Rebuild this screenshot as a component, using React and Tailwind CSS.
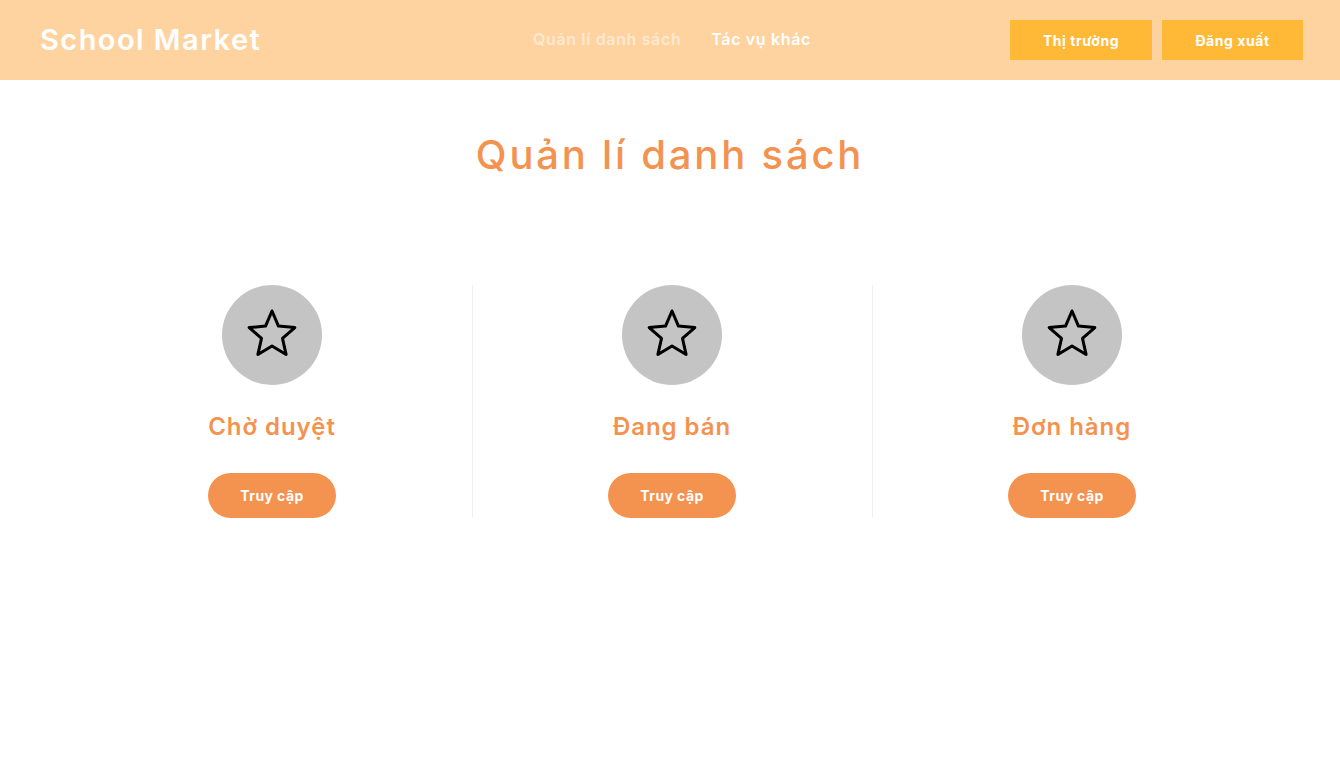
import React from "react"

const Star = () => (
  <svg width="52" height="48" viewBox="0 0 52 48" fill="none">
    <polygon
      points="26,2 32.47,17.1 48.83,18.58 36.46,29.4 40.11,45.42 26,37 11.89,45.42 15.54,29.4 3.17,18.58 19.53,17.1"
      stroke="#000"
      strokeWidth="3"
      strokeLinejoin="round"
    />
  </svg>
)

const items = ["Chờ duyệt", "Đang bán", "Đơn hàng"]

const App = () => {
  return (
    <div className="min-h-screen bg-white font-['Inter',sans-serif]">
      {/* Header */}
      <header className="h-[80px] bg-[#fed39f] flex items-center pl-[40px] pr-[37px]">
        <div className="w-[480px] text-white text-[29px] font-semibold tracking-[0.05em]">School Market</div>
        <nav className="flex items-center gap-[30px] text-[16px] font-semibold ml-[13px] -mt-[2px] tracking-[0.04em]">
          <span className="text-[#fde9d2]">Quản lí danh sách</span>
          <span className="text-white">Tác vụ khác</span>
        </nav>
        <div className="ml-auto flex gap-[10px]">
          <button className="w-[142px] h-[40px] bg-[#ffb937] text-white text-[14px] font-bold tracking-[0.04em]">Thị trường</button>
          <button className="w-[141px] h-[40px] bg-[#ffb937] text-white text-[14px] font-bold tracking-[0.04em]">Đăng xuất</button>
        </div>
      </header>

      <h1 className="text-center text-[#f4924f] text-[40px] font-medium mt-[50px] leading-[50px] tracking-[0.07em]">Quản lí danh sách</h1>

      {/* Columns */}
      <div className="flex justify-center pl-[4px] mt-[105px]">
        <div className="w-[1200px] grid grid-cols-3">
          {items.map((t, i) => (
            <div key={t} className={`flex flex-col items-center ${i > 0 ? "border-l border-[#eef1f6] pr-[1px]" : ""}`}>
              <div className="w-[100px] h-[100px] rounded-full bg-[#c4c4c4] flex items-center justify-center">
                <div className="-mt-[4px]"><Star /></div>
              </div>
              <h2 className="mt-[25px] text-[24px] font-semibold text-[#f4924f] leading-[34px] tracking-[0.04em]">{t}</h2>
              <button className="mt-[29px] w-[128px] h-[45px] rounded-full bg-[#f4924f] text-white text-[14px] font-bold tracking-[0.03em]">Truy cập</button>
            </div>
          ))}
        </div>
      </div>
    </div>
  )
}

export default App
